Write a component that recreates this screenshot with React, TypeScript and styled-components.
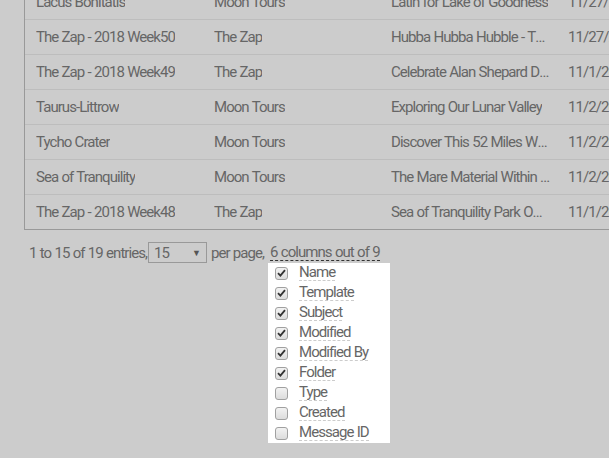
import React from "react";
import styled, { createGlobalStyle } from "styled-components";

const Global = createGlobalStyle`
  html, body { margin: 0; padding: 0; background: #cccccc; overflow: hidden; }
  body { font-family: "Roboto", "Liberation Sans", sans-serif; font-size: 15px; color: #666; letter-spacing: -0.95px; word-spacing: 0.5px; }
`;

const Page = styled.div`
  width: 609px;
  height: 458px;
  overflow: hidden;
  background: #cccccc;
`;

const Scroller = styled.div`
  margin-top: -16px;
  padding-left: 24px;
`;

const Table = styled.div`
  width: 720px;
  border-left: 1px solid #999;
  border-bottom: 1px solid #999;
`;

const Row = styled.div`
  display: grid;
  grid-template-columns: 178px 177px 177px 177px;
  height: 35px;
  border-top: 1px solid #bdbdbd;
  box-sizing: border-box;
  &:first-child { border-top: none; }
`;

const Cell = styled.div`
  padding: 0 7px 0 11px;
  display: flex;
  align-items: center;
  white-space: nowrap;
  overflow: hidden;
  color: #666;
  & > span { overflow: hidden; text-overflow: ellipsis; }
`;

const Footer = styled.div`
  display: flex;
  align-items: center;
  padding: 12px 0 0 29px;
  color: #666;
  height: 21px;
`;

const Select = styled.div`
  width: 59px;
  height: 21px;
  box-sizing: border-box;
  border: 1px solid #999;
  margin: 0 4px 0 1px;
  display: flex;
  align-items: center;
  justify-content: space-between;
  padding: 0 6px 0 5px;
  color: #666;
`;

const Caret = styled.span`
  font-size: 9px;
  color: #555;
`;

const ColumnsToggle = styled.div`
  position: relative;
  margin-left: 6px;
  border-bottom: 1px dashed #333;
  line-height: 16px;
  color: #666;
`;

const Menu = styled.div`
  position: absolute;
  top: 19px;
  left: -2px;
  width: 122px;
  background: #fff;
  padding: 0;
  z-index: 2;
`;

const Item = styled.div`
  display: flex;
  align-items: center;
  height: 20px;
  padding-left: 7px;
`;

const Box = styled.span`
  width: 13px;
  height: 13px;
  box-sizing: border-box;
  border: 1px solid #a0a0a0;
  border-radius: 3px;
  background: linear-gradient(#f2f2f2, #dcdcdc);
  display: flex;
  align-items: center;
  justify-content: center;
  margin-right: 11px;
`;

const Label = styled.span`
  color: #666;
  line-height: 15px;
  border-bottom: 1px dashed #ccc;
`;

const rows = [
  ["Lacus Bonitatis", "Moon Tours", "Latin for Lake of Goodness", "11/27/2018"],
  ["The Zap - 2018 Week50", "The Zap", "Hubba Hubba Hubble - The Telescope", "11/27/2018"],
  ["The Zap - 2018 Week49", "The Zap", "Celebrate Alan Shepard Day", "11/1/2018"],
  ["Taurus-Littrow", "Moon Tours", "Exploring Our Lunar Valley", "11/2/2018"],
  ["Tycho Crater", "Moon Tours", "Discover This 52 Miles Wide Crater", "11/2/2018"],
  ["Sea of Tranquility", "Moon Tours", "The Mare Material Within The Sea", "11/2/2018"],
  ["The Zap - 2018 Week48", "The Zap", "Sea of Tranquility Park Opens", "11/1/2018"],
];

const cols: [string, boolean][] = [
  ["Name", true],
  ["Template", true],
  ["Subject", true],
  ["Modified", true],
  ["Modified By", true],
  ["Folder", true],
  ["Type", false],
  ["Created", false],
  ["Message ID", false],
];

const Check = () => (
  <svg width="9" height="8" viewBox="0 0 9 8">
    <path d="M1 4.2 L3.4 6.6 L8 1.2" stroke="#333" strokeWidth="1.8" fill="none" />
  </svg>
);

export default function App() {
  return (
    <Page>
      <Global />
      <Scroller>
        <Table>
          {rows.map((r, i) => (
            <Row key={i}>
              {r.map((c, j) => (
                <Cell key={j}>
                  <span>{c}</span>
                </Cell>
              ))}
            </Row>
          ))}
        </Table>
      </Scroller>
      <Footer>
        1 to 15 of 19 entries,
        <Select>
          15<Caret>▼</Caret>
        </Select>
        per page,
        <ColumnsToggle>
          6 columns out of 9
          <Menu>
            {cols.map(([n, on]) => (
              <Item key={n}>
                <Box>{on && <Check />}</Box>
                <Label>{n}</Label>
              </Item>
            ))}
          </Menu>
        </ColumnsToggle>
      </Footer>
    </Page>
  );
}
